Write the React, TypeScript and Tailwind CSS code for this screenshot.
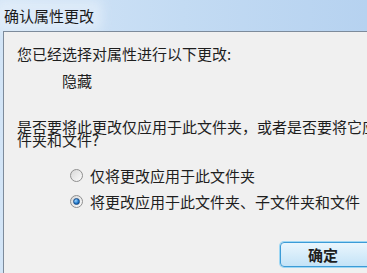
import React from 'react';

const font = { fontFamily: '"Noto Sans CJK SC", "Noto Sans", sans-serif' };

function Radio({ checked }: { checked?: boolean }) {
  return (
    <span className="relative flex h-[13px] w-[13px] shrink-0 items-center justify-center rounded-full border border-[#8f8f8f] bg-gradient-to-br from-[#d8d8d8] to-[#fbfbfb]">
      {checked && (
        <span className="h-[7px] w-[7px] rounded-full border border-[#1c4d86] bg-[radial-gradient(circle_at_35%_35%,#9fd6ff,#1a74c9_60%,#0d3f7a)]" />
      )}
    </span>
  );
}

export default function App() {
  return (
    <div
      className="flex h-[273px] w-[367px] flex-col overflow-hidden bg-gradient-to-r from-[#d3e5f7] via-[#c3dbf3] to-[#b6d2f0] text-[#1e1e1e]"
      style={font}
    >
      <div className="flex h-[31px] shrink-0 items-center pl-[4px] text-[15px] leading-none text-[#1a1a1a]">
        <span className="shadow-[0_0_12px_8px_rgba(236,244,252,0.55)] bg-[#e9f2fb]/50">确认属性更改</span>
      </div>
      <div className="flex min-w-0 flex-1 overflow-hidden pl-[3px]">
        <div className="min-w-0 flex-1 overflow-hidden border-l border-t border-[#7d8b9b] bg-[#f0f0f0] pl-[13px] pt-[13px] text-[15px] leading-[17px]">
          <p className="whitespace-nowrap">您已经选择对属性进行以下更改:</p>
          <p className="mt-[10px] pl-[45px]">隐藏</p>
          <p className="mt-[31px] whitespace-nowrap leading-[13px]">
            是否要将此更改仅应用于此文件夹，或者是否要将它应用于所有子文
            <br />
            件夹和文件?
          </p>
          <div className="mt-[21px] flex flex-col gap-[9px] pl-[53px]">
            <label className="flex items-center gap-[7px]">
              <Radio />
              <span>仅将更改应用于此文件夹</span>
            </label>
            <label className="flex items-center gap-[7px]">
              <Radio checked />
              <span className="whitespace-nowrap">将更改应用于此文件夹、子文件夹和文件</span>
            </label>
          </div>
          <div className="mt-[32px] flex justify-end">
            <button className="-mr-[23px] flex h-[25px] w-[110px] shrink-0 items-center rounded-[4px] border border-[#3c9bd6] bg-gradient-to-b from-[#eaf6fd] to-[#c4e3f7] pl-[27px] text-[15px] font-bold leading-none shadow-[0_0_0_1px_#9ed7f4]">
              确定
            </button>
          </div>
        </div>
      </div>
    </div>
  );
}
